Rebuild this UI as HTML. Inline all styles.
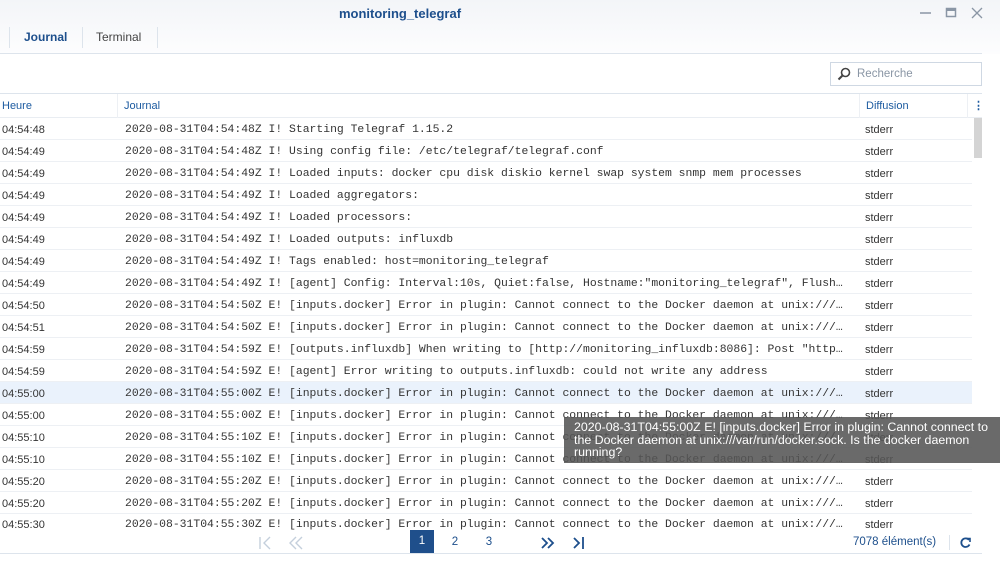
<!DOCTYPE html>
<html><head><meta charset="utf-8"><style>
*{margin:0;padding:0;box-sizing:border-box}
body{width:1000px;height:562px;overflow:hidden;background:#fff;font-family:"Liberation Sans",sans-serif;position:relative}
.top{position:absolute;left:0;top:0;width:1000px;height:54px;background:linear-gradient(#f3f5f8,#fdfdfe)}
.title{position:absolute;left:0;width:800px;top:6px;text-align:center;font-weight:bold;font-size:13px;color:#1d4f8c}
.tab{position:absolute;top:27px;height:21px;font-size:12px;line-height:21px}
.line{position:absolute;background:#dde4ec}
.search{position:absolute;left:830px;top:62px;width:152px;height:24px;border:1px solid #cfd8e3;font-size:11.5px;color:#8a96a5;line-height:22px;padding-left:26px}
.hdr{position:absolute;top:94px;height:24px;font-size:11px;color:#1d5ba0;line-height:24px}
.row{position:absolute;left:0;width:972px;height:22px;border-bottom:1px solid #edf0f4;font-size:11px;line-height:22px;color:#333}
.row span{position:absolute;top:1px}
.t{left:2px}
.m{left:125px;font-family:"Liberation Mono",monospace;font-size:11.4px;white-space:nowrap}
.d{left:865px}
.tip{position:absolute;left:564px;top:417px;width:436px;height:46px;background:rgba(85,85,85,0.88);color:#fff;font-size:12.4px;line-height:12.5px;padding:4px 0 0 10px;white-space:nowrap}
.pg{position:absolute;top:531px;font-size:11.5px;color:#1d4f8c;text-align:center;line-height:22px}
</style></head><body>
<div class="top"></div>
<div class="title">monitoring_telegraf</div>
<svg style="position:absolute;left:918px;top:6px" width="70" height="14"><line x1="2" y1="7" x2="13" y2="7" stroke="#8a96a5" stroke-width="1.5"/><rect x="28.5" y="2.5" width="9" height="8" fill="none" stroke="#8a96a5" stroke-width="1.5"/><rect x="28.5" y="2.5" width="9" height="2.5" fill="#8a96a5"/><path d="M54 2L64 12M64 2L54 12" stroke="#8a96a5" stroke-width="1.3"/></svg>
<div class="line" style="left:9px;top:27px;width:1px;height:21px"></div>
<div class="tab" style="left:24px;color:#1d4f8c;font-weight:bold">Journal</div>
<div class="line" style="left:82px;top:27px;width:1px;height:21px"></div>
<div class="tab" style="left:96px;color:#444">Terminal</div>
<div class="line" style="left:157px;top:27px;width:1px;height:21px"></div>
<div class="line" style="left:0;top:53px;width:982px;height:1px"></div>
<div class="search">Recherche</div>
<svg style="position:absolute;left:837px;top:67px" width="14" height="14"><circle cx="8.5" cy="5.5" r="4" fill="none" stroke="#444" stroke-width="1.6"/><line x1="5.5" y1="8.5" x2="1.5" y2="12.5" stroke="#444" stroke-width="2"/></svg>
<div class="line" style="left:0;top:93px;width:982px;height:1px"></div>
<div class="line" style="left:0;top:117px;width:982px;height:1px;background:#e9edf2"></div>
<div class="hdr" style="left:2px">Heure</div>
<div class="line" style="left:117px;top:94px;width:1px;height:24px;background:#edf0f4"></div>
<div class="hdr" style="left:124px">Journal</div>
<div class="line" style="left:859px;top:94px;width:1px;height:24px;background:#edf0f4"></div>
<div class="hdr" style="left:866px">Diffusion</div>
<div class="line" style="left:967px;top:94px;width:1px;height:24px;background:#edf0f4"></div>
<div class="hdr" style="left:973px;font-weight:bold">⋮</div>
<div style="position:absolute;left:974px;top:118px;width:8px;height:40px;background:#d4d4d4"></div>

<div class="row" style="top:118px"><span class="t">04:54:48</span><span class="m">2020-08-31T04:54:48Z I! Starting Telegraf 1.15.2</span><span class="d">stderr</span></div>
<div class="row" style="top:140px"><span class="t">04:54:49</span><span class="m">2020-08-31T04:54:48Z I! Using config file: /etc/telegraf/telegraf.conf</span><span class="d">stderr</span></div>
<div class="row" style="top:162px"><span class="t">04:54:49</span><span class="m">2020-08-31T04:54:49Z I! Loaded inputs: docker cpu disk diskio kernel swap system snmp mem processes</span><span class="d">stderr</span></div>
<div class="row" style="top:184px"><span class="t">04:54:49</span><span class="m">2020-08-31T04:54:49Z I! Loaded aggregators:</span><span class="d">stderr</span></div>
<div class="row" style="top:206px"><span class="t">04:54:49</span><span class="m">2020-08-31T04:54:49Z I! Loaded processors:</span><span class="d">stderr</span></div>
<div class="row" style="top:228px"><span class="t">04:54:49</span><span class="m">2020-08-31T04:54:49Z I! Loaded outputs: influxdb</span><span class="d">stderr</span></div>
<div class="row" style="top:250px"><span class="t">04:54:49</span><span class="m">2020-08-31T04:54:49Z I! Tags enabled: host=monitoring_telegraf</span><span class="d">stderr</span></div>
<div class="row" style="top:272px"><span class="t">04:54:49</span><span class="m">2020-08-31T04:54:49Z I! [agent] Config: Interval:10s, Quiet:false, Hostname:"monitoring_telegraf", Flush…</span><span class="d">stderr</span></div>
<div class="row" style="top:294px"><span class="t">04:54:50</span><span class="m">2020-08-31T04:54:50Z E! [inputs.docker] Error in plugin: Cannot connect to the Docker daemon at unix:///…</span><span class="d">stderr</span></div>
<div class="row" style="top:316px"><span class="t">04:54:51</span><span class="m">2020-08-31T04:54:50Z E! [inputs.docker] Error in plugin: Cannot connect to the Docker daemon at unix:///…</span><span class="d">stderr</span></div>
<div class="row" style="top:338px"><span class="t">04:54:59</span><span class="m">2020-08-31T04:54:59Z E! [outputs.influxdb] When writing to [http://monitoring_influxdb:8086]: Post "http…</span><span class="d">stderr</span></div>
<div class="row" style="top:360px"><span class="t">04:54:59</span><span class="m">2020-08-31T04:54:59Z E! [agent] Error writing to outputs.influxdb: could not write any address</span><span class="d">stderr</span></div>
<div class="row" style="top:382px;background:#eaf2fc"><span class="t">04:55:00</span><span class="m">2020-08-31T04:55:00Z E! [inputs.docker] Error in plugin: Cannot connect to the Docker daemon at unix:///…</span><span class="d">stderr</span></div>
<div class="row" style="top:404px"><span class="t">04:55:00</span><span class="m">2020-08-31T04:55:00Z E! [inputs.docker] Error in plugin: Cannot connect to the Docker daemon at unix:///…</span><span class="d">stderr</span></div>
<div class="row" style="top:426px"><span class="t">04:55:10</span><span class="m">2020-08-31T04:55:10Z E! [inputs.docker] Error in plugin: Cannot connect to the Docker daemon at unix:///…</span><span class="d">stderr</span></div>
<div class="row" style="top:448px"><span class="t">04:55:10</span><span class="m">2020-08-31T04:55:10Z E! [inputs.docker] Error in plugin: Cannot connect to the Docker daemon at unix:///…</span><span class="d">stderr</span></div>
<div class="row" style="top:470px"><span class="t">04:55:20</span><span class="m">2020-08-31T04:55:20Z E! [inputs.docker] Error in plugin: Cannot connect to the Docker daemon at unix:///…</span><span class="d">stderr</span></div>
<div class="row" style="top:492px"><span class="t">04:55:20</span><span class="m">2020-08-31T04:55:20Z E! [inputs.docker] Error in plugin: Cannot connect to the Docker daemon at unix:///…</span><span class="d">stderr</span></div>
<div class="row" style="top:514px;height:16px;overflow:hidden;border:0"><span class="t" style="top:0">04:55:30</span><span class="m" style="top:0">2020-08-31T04:55:30Z E! [inputs.docker] Error in plugin: Cannot connect to the Docker daemon at unix:///…</span><span class="d" style="top:0">stderr</span></div>
<div style="position:absolute;left:0;top:530px;width:1000px;height:32px;background:#fff"></div>

<div class="tip">2020-08-31T04:55:00Z E! [inputs.docker] Error in plugin: Cannot connect to<br>the Docker daemon at unix:///var/run/docker.sock. Is the docker daemon<br>running?</div>

<svg style="position:absolute;left:255px;top:535px" width="340" height="16">
<path d="M5 2V14M15 2L9 8L15 14" fill="none" stroke="#c4cfdc" stroke-width="1.4"/>
<path d="M41 2L35 8L41 14M47 2L41 8L47 14" fill="none" stroke="#c4cfdc" stroke-width="1.4"/>
<path d="M287 3L292 8L287 13M293 3L298 8L293 13" fill="none" stroke="#1d4f8c" stroke-width="1.8"/>
<path d="M319 3L324 8L319 13M328 2V14" fill="none" stroke="#1d4f8c" stroke-width="1.8"/>
</svg>
<div style="position:absolute;left:410px;top:530px;width:24px;height:23px;background:#1f4f8b;color:#fff;font-size:11.5px;text-align:center;line-height:23px">1</div>
<div class="pg" style="left:448px;width:14px">2</div>
<div class="pg" style="left:482px;width:14px">3</div>
<div class="pg" style="left:853px;font-size:11.5px">7078 élément(s)</div>
<div class="line" style="left:949px;top:535px;width:1px;height:15px"></div>
<svg style="position:absolute;left:959px;top:536px" width="13" height="13"><path d="M10 4A4.3 4.3 0 1 0 10.5 8.5" fill="none" stroke="#1d4f8c" stroke-width="1.8"/><path d="M7.5 2.5H11V6" fill="none" stroke="#1d4f8c" stroke-width="1.6"/></svg>
<div class="line" style="left:0;top:553px;width:982px;height:1px"></div>
</body></html>
